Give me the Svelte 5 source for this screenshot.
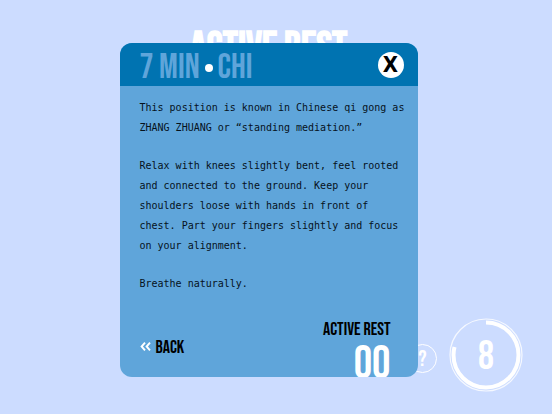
<script>
  const paragraphs = [
    'This position is known in Chinese qi gong as ZHANG ZHUANG or “standing mediation.”',
    'Relax with knees slightly bent, feel rooted and connected to the ground. Keep your shoulders loose with hands in front of chest. Part your fingers slightly and focus on your alignment.',
    'Breathe naturally.'
  ];
  let open = $state(true);
  let secondsLeft = $state(8);
  const progress = 79;
</script>

<div class="page">
  <h1>ACTIVE REST</h1>

  <div class="controls">
    <button class="help" aria-label="Help"><span>?</span></button>
    <div class="timer" role="timer">
      <svg viewBox="0 0 74 74" aria-hidden="true">
        <circle cx="37" cy="37" r="36" fill="none" stroke="#fff" stroke-opacity=".8" stroke-width="1.2" />
        <circle cx="37" cy="37" r="32.5" fill="none" stroke="#fff" stroke-width="4" pathLength="100"
          stroke-dasharray="{progress} 100" transform="rotate(-90 37 37)" />
      </svg>
      <span>{secondsLeft}</span>
    </div>
  </div>

  {#if open}
    <div class="overlay">
      <div class="card" role="dialog" aria-labelledby="card-title">
        <header>
          <h2 id="card-title">7 MIN <i></i> CHI</h2>
          <button class="close" aria-label="Close" onclick={() => (open = false)}>X</button>
        </header>
        <div class="body">
          {#each paragraphs as text}
            <p>{text}</p>
          {/each}
        </div>
        <footer>
          <a class="back" href="#back">
            <svg viewBox="0 0 11 9" aria-hidden="true">
              <path d="M5 .7 1.6 4.5 5 8.3M10 .7 6.6 4.5 10 8.3" fill="none" stroke="#fff" stroke-width="1.9" />
            </svg>
            <span>BACK</span>
          </a>
          <div class="rest">
            <span class="label">ACTIVE REST</span>
            <span class="count">00</span>
          </div>
        </footer>
      </div>
    </div>
  {/if}
</div>

<style>
  .page {
    position: relative;
    display: flex;
    flex-direction: column;
    justify-content: space-between;
    box-sizing: border-box;
    min-height: 100vh;
    padding: 28px 15px 0 0;
    overflow: hidden;
    background: #ccdcff;
    font-family: 'Bebas Neue', 'Liberation Sans Narrow', 'Roboto Condensed', 'DejaVu Sans Condensed', sans-serif;
  }
  h1 {
    margin: 0;
    color: #fff;
    font-size: 42px;
    line-height: 42px;
    text-align: center;
  }
  button {
    padding: 0;
    font-family: inherit;
    cursor: pointer;
  }
  .controls {
    display: flex;
    align-items: center;
    justify-content: flex-end;
    gap: 12px;
    padding-bottom: 22px;
    margin-right: 14px;
  }
  .help {
    width: 29px;
    height: 29px;
    margin-top: 7px;
    border: 1px solid #fff;
    border-radius: 50%;
    background: none;
    color: #fff;
    font-size: 22px;
    line-height: 29px;
  }
  .timer {
    display: grid;
    place-items: center;
    width: 74px;
    height: 74px;
  }
  .timer > * {
    grid-area: 1 / 1;
  }
  .timer svg {
    width: 74px;
    height: 74px;
  }
  .timer span {
    padding-top: 4px;
    color: #fff;
    font-size: 40px;
    line-height: 40px;
  }
  .overlay {
    position: absolute;
    inset: 0 15px 0 0;
    display: flex;
    justify-content: center;
    align-items: flex-start;
    padding-top: 43px;
  }
  .card {
    width: 298px;
    max-width: 100%;
    overflow: hidden;
    border-radius: 12px;
    background: #5fa5da;
  }
  header {
    display: flex;
    align-items: center;
    justify-content: space-between;
    box-sizing: border-box;
    height: 43px;
    padding: 0 14px 0 20px;
    background: #0073b1;
  }
  h2 {
    display: flex;
    align-items: center;
    gap: 5px;
    margin: 0;
    padding-top: 6px;
    color: #5fa5da;
    font-size: 35px;
    font-weight: 400;
    line-height: 42px;
  }
  h2 i {
    width: 8px;
    height: 8px;
    border-radius: 50%;
    background: #fff;
  }
  .close {
    width: 26px;
    height: 26px;
    border: 0;
    border-radius: 50%;
    background: #fff;
    color: #000;
    font-family: 'DejaVu Sans Condensed', 'DejaVu Sans', sans-serif;
    font-size: 22px;
    font-weight: 700;
    line-height: 26px;
  }
  .body {
    padding: 12px 10px 0 20px;
    color: #06121c;
    font-family: 'DejaVu Sans Mono', monospace;
    font-size: 10px;
    line-height: 20px;
  }
  p {
    margin: 0 0 18px;
  }
  footer {
    display: flex;
    justify-content: space-between;
    height: 62px;
    margin-top: 21px;
    padding: 0 27px 0 20px;
  }
  .back {
    display: flex;
    align-items: center;
    align-self: center;
    gap: 5px;
    color: #000;
    font-size: 18px;
    line-height: 20px;
    text-decoration: none;
  }
  .back span {
    padding-top: 4px;
  }
  .back svg {
    width: 11px;
    height: 9px;
  }
  .rest {
    display: flex;
    flex-direction: column;
    align-items: flex-end;
  }
  .label {
    color: #000;
    font-size: 18px;
    line-height: 30px;
  }
  .count {
    color: #fff;
    font-size: 46px;
    line-height: 40px;
  }
</style>
